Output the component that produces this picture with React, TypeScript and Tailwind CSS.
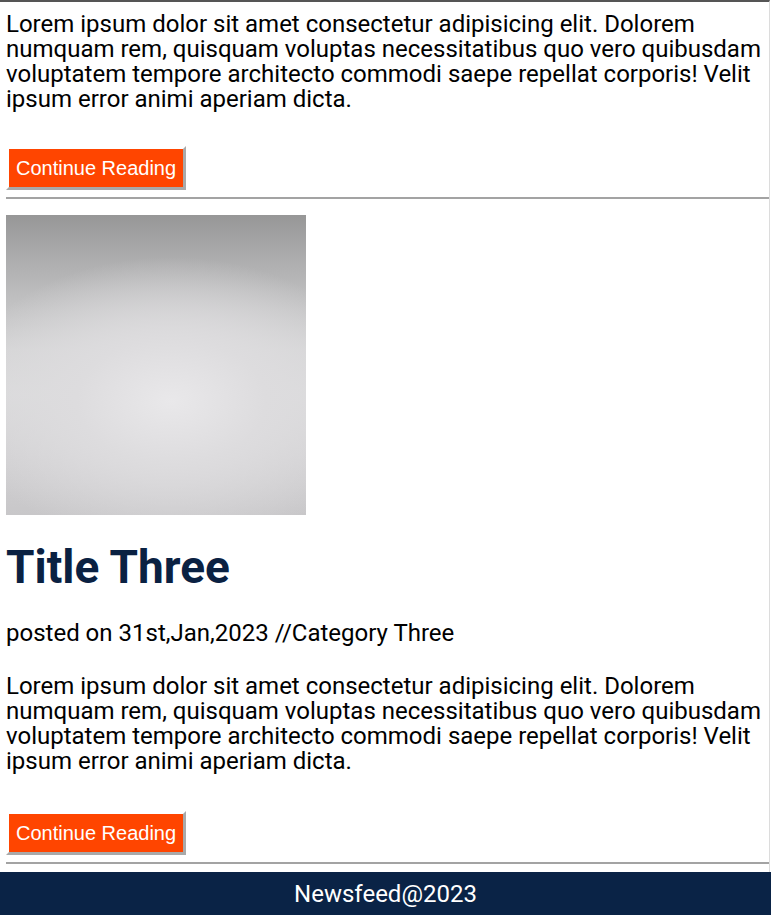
import React from "react";

const lorem =
  "Lorem ipsum dolor sit amet consectetur adipisicing elit. Dolorem numquam rem, quisquam voluptas necessitatibus quo vero quibusdam voluptatem tempore architecto commodi saepe repellat corporis! Velit ipsum error animi aperiam dicta.";

function ContinueButton() {
  return (
    <button
      className="block border-[3px] border-t-white border-l-white border-r-[#a9a9a9] border-b-[#a9a9a9] bg-[#ff4500] px-[7px] py-[7px] text-[20px] leading-[24px] text-white"
      style={{ fontFamily: '"Liberation Sans", Arial, sans-serif' }}
    >
      Continue Reading
    </button>
  );
}

export default function App() {
  return (
    <div
      className="w-[771px] h-[915px] overflow-hidden bg-white text-black"
      style={{ fontFamily: 'Roboto, "Noto Sans", sans-serif' }}
    >
      <div className="border-t-2 border-[#555] border-r border-r-[#dcdcdc] w-[770px] pl-[6px] pb-[8px]">
        <p className="pt-[10px] text-[24px] leading-[25px] pr-[4px]">{lorem}</p>
        <div className="mt-[34px]">
          <ContinueButton />
        </div>
        <div className="mt-[7px] h-[2px] bg-[#a3a3a3]" />
        <div className="mt-[16px] w-[300px] h-[300px] bg-[radial-gradient(ellipse_90%_60%_at_55%_62%,#e9e8ea_0%,#dddcde_35%,rgba(200,199,201,0)_80%),linear-gradient(180deg,#979797_0%,#a9a9aa_12%,#c2c2c3_30%,#d4d4d5_45%,#dadadb_60%,#d2d1d3_80%,#c8c7c9_100%)]" />
        <h1 className="mt-[24px] text-[46px] leading-[56px] font-bold text-[#0a2142]">
          Title Three
        </h1>
        <p className="mt-[26px] text-[24px] leading-[25px]">
          posted on 31st,Jan,2023 //Category Three
        </p>
        <p className="mt-[28px] text-[24px] leading-[25px] pr-[4px]">{lorem}</p>
        <div className="mt-[37px]">
          <ContinueButton />
        </div>
        <div className="mt-[7px] h-[2px] bg-[#a3a3a3]" />
      </div>
      <footer className="h-[43px] bg-[#0a2346] flex items-center justify-center text-white text-[24px]">
        Newsfeed@2023
      </footer>
    </div>
  );
}
